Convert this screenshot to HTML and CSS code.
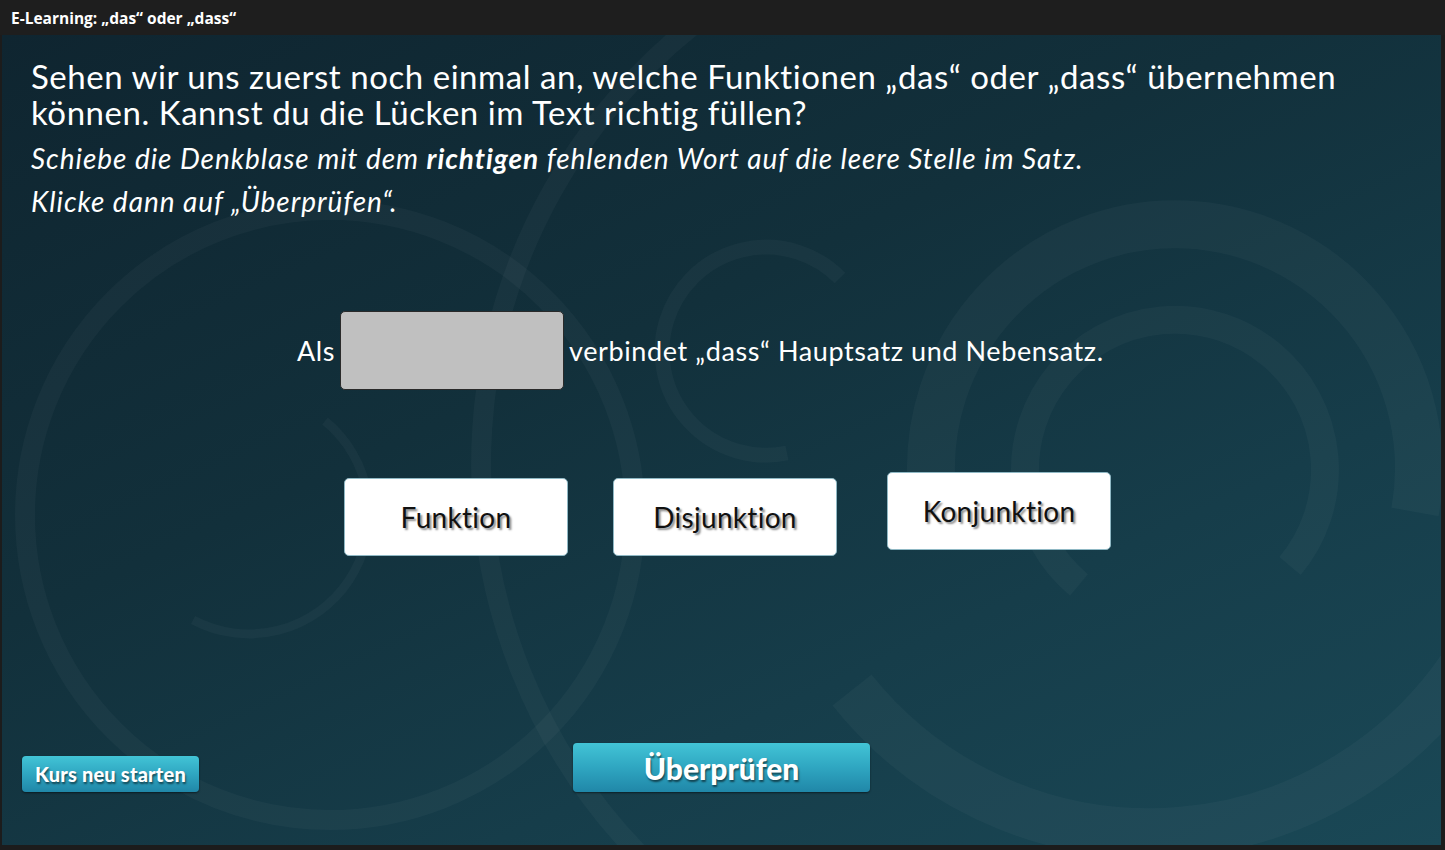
FILE: index.html
```html
<!DOCTYPE html>
<html lang="de">
<head>
<meta charset="utf-8">
<title>E-Learning: „das“ oder „dass“</title>
<link rel="stylesheet" href="styles.css">
</head>
<body>
<div class="titlebar">E-Learning: „das“ oder „dass“</div>
<div class="stage">
  <svg class="deco" viewBox="0 0 1439 810" width="1439" height="810" aria-hidden="true">
    <g fill="none" stroke="rgba(255,255,255,0.032)" transform="translate(-2,-35)">
      <circle cx="330" cy="515" r="305" stroke-width="20"/>
      <path d="M325,421 A120,120 0 0 1 193,620" stroke-width="9"/>
      <path d="M840,278 A104,104 0 1 0 787,453" stroke-width="15"/>
      <path d="M700,20 A560,560 0 0 0 645,860" stroke-width="20"/>
      <path d="M932,491 A244,244 0 1 1 1415,512" stroke-width="48"/>
      <path d="M1079,585 A150,150 0 1 1 1290,566" stroke-width="28"/>
      <path d="M852,690 A380,380 0 0 0 1480,640" stroke-width="50"/>
    </g>
  </svg>
  <div class="content">
    <h1 class="question">Sehen wir uns zuerst noch einmal an, welche Funktionen „das“ oder „dass“ übernehmen können. Kannst du die Lücken im Text richtig füllen?</h1>
    <p class="hint">Schiebe die Denkblase mit dem <b>richtigen</b> fehlenden Wort auf die leere Stelle im Satz.</p>
    <p class="hint">Klicke dann auf „Überprüfen“.</p>

    <div class="sentence">
      <span>Als</span>
      <span class="gap"></span>
      <span>verbindet „dass“ Hauptsatz und Nebensatz.</span>
    </div>

    <div class="choices">
      <div class="card card-low">Funktion</div>
      <div class="card card-low">Disjunktion</div>
      <div class="card">Konjunktion</div>
    </div>

    <div class="actions">
      <button class="btn btn-small">Kurs neu starten</button>
      <button class="btn btn-big">Überprüfen</button>
    </div>
  </div>
</div>
</body>
</html>
```

FILE: styles.css
```css
html, body {
  margin: 0;
  padding: 0;
  background: #1c1c1c;
}

body {
  width: 1445px;
  height: 850px;
  overflow: hidden;
  font-family: Lato, "Open Sans", sans-serif;
}

.titlebar {
  height: 35px;
  line-height: 36px;
  padding-left: 11px;
  color: #ffffff;
  font-family: "Open Sans", sans-serif;
  font-weight: 700;
  font-size: 15.5px;
  background: #1e1e1e;
}

.stage {
  position: relative;
  width: 1439px;
  height: 810px;
  margin-left: 2px;
  overflow: hidden;
  background: linear-gradient(155deg, #0f2530 0%, #12303b 40%, #163d4a 70%, #1a4856 100%);
}

.deco {
  position: absolute;
  left: 0;
  top: 0;
}

.content {
  position: relative;
  display: flex;
  flex-direction: column;
  height: 100%;
  box-sizing: border-box;
  padding: 23px 0 53px 0;
  color: #ffffff;
}

.question {
  margin: 0;
  padding-left: 29px;
  font-weight: 400;
  font-size: 33px;
  letter-spacing: 0.55px;
  line-height: 36px;
  width: 1360px;
}

.hint {
  margin: 0;
  padding-left: 29px;
  font-style: italic;
  font-size: 28px;
  letter-spacing: 0.95px;
  line-height: 43px;
}

.question + .hint {
  margin-top: 7px;
}

.hint b {
  font-weight: 700;
}

.sentence {
  display: flex;
  align-items: center;
  gap: 5px;
  margin: 88px 0 0 295px;
  font-size: 27px;
  letter-spacing: 0.6px;
}

.gap {
  width: 222px;
  height: 77px;
  background: #c0c0c0;
  border: 1px solid #2a2a2a;
  border-radius: 5px;
}

.choices {
  display: flex;
  align-items: flex-start;
  margin: 82px 0 0 342px;
  gap: 45px;
}

.choices .card:last-child {
  margin-left: 5px;
}

.card {
  width: 222px;
  height: 76px;
  display: flex;
  align-items: center;
  justify-content: center;
  background: #ffffff;
  border: 1px solid #8fb8c4;
  border-radius: 5px;
  color: #111111;
  font-size: 28px;
  letter-spacing: 0.3px;
  text-shadow: 2px 2px 2px rgba(0, 0, 0, 0.45);
}

.card-low {
  margin-top: 6px;
}

.actions {
  margin-top: auto;
  display: flex;
  align-items: flex-end;
  padding-left: 20px;
  gap: 374px;
}

.btn {
  border: none;
  border-radius: 4px;
  padding: 0;
  color: #ffffff;
  font-family: Lato, "Open Sans", sans-serif;
  font-weight: 900;
  background: linear-gradient(180deg, #42c4d6 0%, #2fa6c1 50%, #2087a8 100%);
  box-shadow: 0 1px 2px rgba(0, 0, 0, 0.5);
  text-shadow: 1px 2px 2px rgba(0, 0, 0, 0.55);
}

.btn-small {
  width: 177px;
  height: 36px;
  font-size: 20px;
  letter-spacing: 0.2px;
}

.btn-big {
  width: 297px;
  height: 49px;
  font-size: 30px;
}
```
